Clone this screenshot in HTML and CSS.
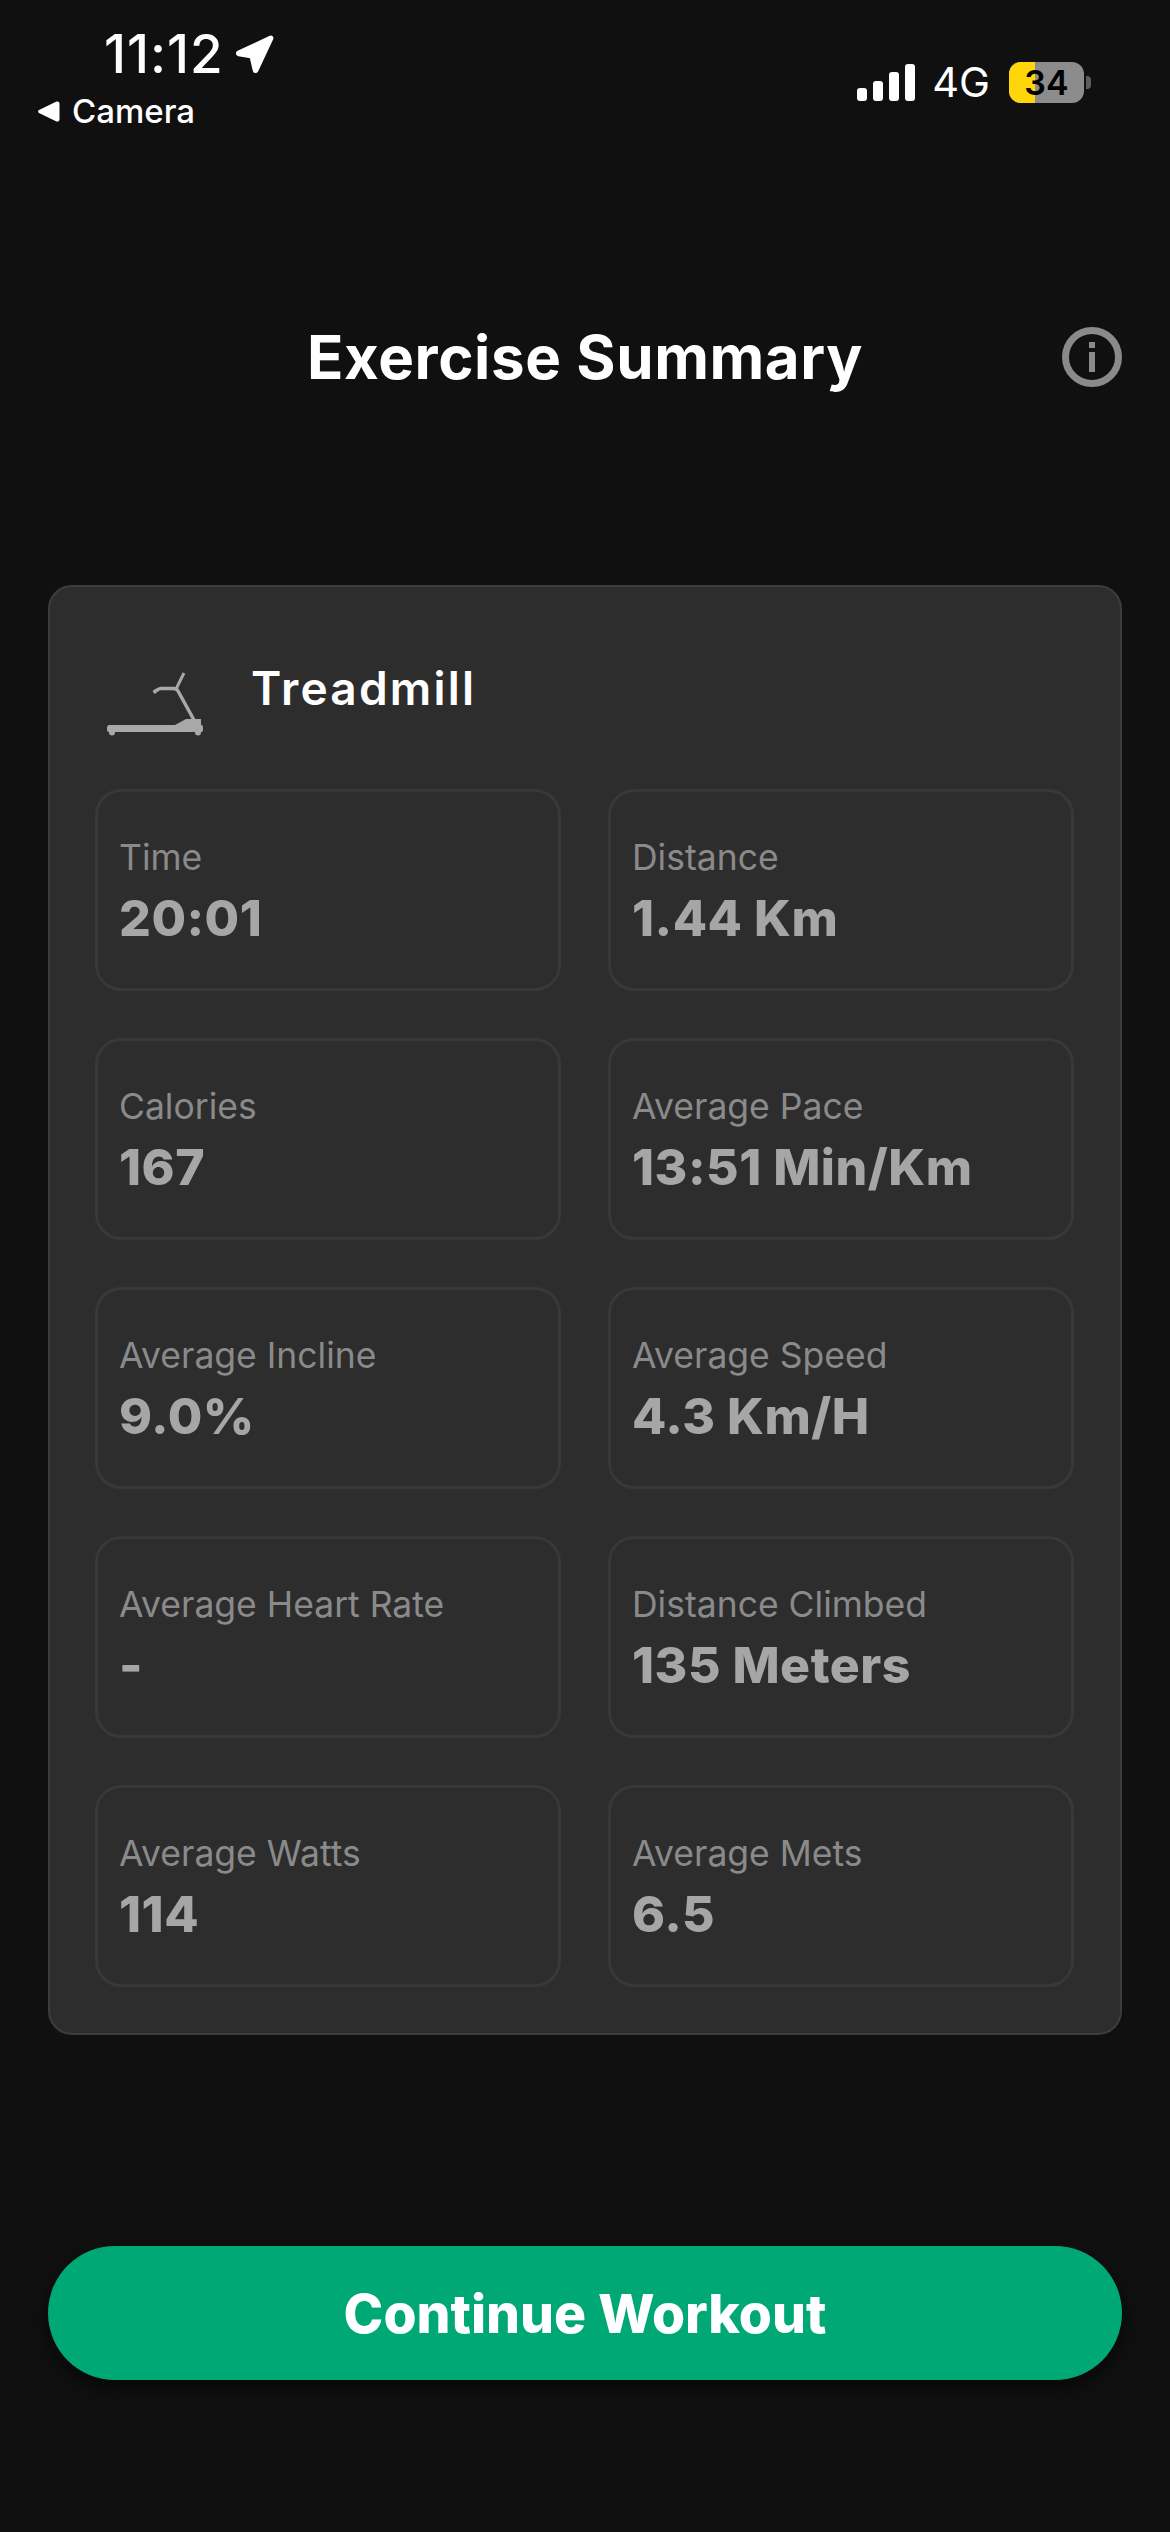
FILE: index.html
```html
<!DOCTYPE html>
<html>
<head>
	<title>Exercise Summary</title>
	<meta charset="UTF-8">
	<link rel="stylesheet" href="styles.css">
</head>
<body>
	<div class="statusbar">
		<div class="status-left">
			<div class="clock">
				<span>11:12</span>
				<svg class="arrow" viewBox="0 0 39 38"><path d="M3 16.5 35 1.5c1.600-.8 3.200.8 2.500 2.400L22.500 36c-.9 1.900-3.600 1.600-4-.5L15.500 22.500 3.500 20.500C1.400 20.100 1 17.500 3 16.500Z" fill="#fff" stroke="#fff" stroke-width="1.500" stroke-linejoin="round"/></svg>
			</div>
			<div class="back">
				<svg class="back-arrow" viewBox="0 0 22 21"><path d="M1 9 18.500.6C20 0 21.500 1 21.500 2.500v16c0 1.500-1.500 2.500-3 1.900L1 12c-1.300-.6-1.300-2.400 0-3Z" fill="#fff"/></svg>
				<span>Camera</span>
			</div>
		</div>
		<div class="status-right">
			<div class="signal">
				<i class="bar bar1"></i><i class="bar bar2"></i><i class="bar bar3"></i><i class="bar bar4"></i>
			</div>
			<span class="network">4G</span>
			<div class="battery">
				<div class="battery-body"><div class="battery-fill"></div><span>34</span></div>
				<div class="battery-nub"></div>
			</div>
		</div>
	</div>

	<div class="header">
		<span></span>
		<h1>Exercise Summary</h1>
		<svg class="info" viewBox="0 0 60 60">
			<circle cx="30" cy="30" r="26.500" fill="none" stroke="#8a8a8a" stroke-width="7"/>
			<rect x="27" y="15" width="6" height="6" fill="#8a8a8a"/>
			<rect x="27" y="25" width="6" height="20" fill="#8a8a8a"/>
		</svg>
	</div>

	<div class="card">
		<div class="card-title">
			<svg class="treadmill" viewBox="0 0 96 64">
				<path d="M3 53H68L79 47H94V53H94.500C96 53 96 55 96 56.500C96 58 96 60 94.500 60H2C0 60 0 58 0 56.500C0 55 0 53 3 53Z" fill="#a8a8a8"/>
				<circle cx="5" cy="60.500" r="3" fill="#a8a8a8"/>
				<circle cx="91" cy="60.500" r="3" fill="#a8a8a8"/>
				<path d="M87 48 71 19C70 17 68 16.500 66 16.500H54C51 16.500 49 19 46.500 20.500" fill="none" stroke="#a8a8a8" stroke-width="3.500"/>
				<path d="M69 17 77 1" fill="none" stroke="#a8a8a8" stroke-width="3"/>
			</svg>
			<h2>Treadmill</h2>
		</div>
		<div class="stats">
			<div class="stat"><div class="stat-label">Time</div><div class="stat-value">20:01</div></div>
			<div class="stat"><div class="stat-label">Distance</div><div class="stat-value">1.44 Km</div></div>
			<div class="stat"><div class="stat-label">Calories</div><div class="stat-value">167</div></div>
			<div class="stat"><div class="stat-label">Average Pace</div><div class="stat-value">13:51 Min/Km</div></div>
			<div class="stat"><div class="stat-label">Average Incline</div><div class="stat-value">9.0%</div></div>
			<div class="stat"><div class="stat-label">Average Speed</div><div class="stat-value">4.3 Km/H</div></div>
			<div class="stat"><div class="stat-label">Average Heart Rate</div><div class="stat-value">-</div></div>
			<div class="stat"><div class="stat-label">Distance Climbed</div><div class="stat-value">135 Meters</div></div>
			<div class="stat"><div class="stat-label">Average Watts</div><div class="stat-value">114</div></div>
			<div class="stat"><div class="stat-label">Average Mets</div><div class="stat-value">6.5</div></div>
		</div>
	</div>

	<div class="footer">
		<button class="continue">Continue Workout</button>
	</div>
</body>
</html>
```

FILE: styles.css
```css
body{
	margin: 0;
	height: 2532px;
	background: #101011;
	color: #fff;
	font-family: Inter, "Liberation Sans", sans-serif;
	overflow: hidden;
}

.statusbar{
	display: flex;
	justify-content: space-between;
	align-items: flex-start;
	height: 150px;
}

.status-left{
	padding: 24px 0 0 38px;
}

.clock{
	display: flex;
	align-items: center;
	gap: 11px;
	padding-left: 66px;
	height: 60px;
	font-size: 53px;
	font-weight: 500;
	letter-spacing: 1px;
}

.arrow{
	width: 39px;
	height: 38px;
}

.back{
	display: flex;
	align-items: center;
	gap: 12px;
	margin-top: 7px;
	font-size: 33px;
	font-weight: 500;
}

.back-arrow{
	width: 22px;
	height: 21px;
}

.status-right{
	display: flex;
	align-items: center;
	padding: 57px 79px 0 0;
}

.signal{
	display: flex;
	align-items: flex-end;
	gap: 6px;
	height: 37px;
}

.bar{
	display: block;
	width: 10px;
	border-radius: 3px;
	background: #fff;
}

.bar1{ height: 13px; }
.bar2{ height: 20px; }
.bar3{ height: 29px; }
.bar4{ height: 37px; }

.network{
	margin-left: 17px;
	font-size: 41.500px;
}

.battery{
	display: flex;
	align-items: center;
	margin-left: 19px;
}

.battery-body{
	position: relative;
	display: flex;
	justify-content: center;
	align-items: center;
	width: 75px;
	height: 41px;
	border-radius: 12px;
	background: #8c8c8c;
	overflow: hidden;
	color: #000;
	font-size: 34px;
	font-weight: 600;
}

.battery-body span{
	position: relative;
}

.battery-fill{
	position: absolute;
	top: 0;
	bottom: 0;
	left: 0;
	width: 26px;
	background: #ffd60a;
}

.battery-nub{
	width: 5px;
	height: 13px;
	margin-left: 2px;
	border-radius: 0 4px 4px 0;
	background: #5c5c5c;
}

.header{
	display: grid;
	grid-template-columns: 1fr auto 1fr;
	align-items: center;
	padding: 171px 48px 0;
}

.header h1{
	margin: 0;
	font-size: 60px;
	font-weight: 700;
	letter-spacing: 0.6px;
}

.info{
	justify-self: end;
	width: 60px;
	height: 60px;
}

.card{
	box-sizing: border-box;
	width: 1074px;
	height: 1450px;
	margin: 192px 48px 0;
	padding: 0 45px;
	border: 2px solid #3d3d3d;
	border-radius: 24px;
	background: #2d2d2d;
}

.card-title{
	display: flex;
	gap: 48px;
	height: 202px;
	padding: 85px 0 0 12px;
	box-sizing: border-box;
}

.card-title h2{
	margin: -12px 0 0;
	font-size: 46px;
	font-weight: 600;
	letter-spacing: 2.200px;
}

.treadmill{
	width: 96px;
	height: 64px;
}

.stats{
	display: grid;
	grid-template-columns: 466px 466px;
	grid-auto-rows: 202px;
	gap: 47px;
}

.stat{
	box-sizing: border-box;
	padding: 45px 21px 0;
	border: 3px solid #383838;
	border-radius: 26px;
}

.stat-label{
	color: #8a8a8a;
	font-size: 35.500px;
	line-height: 42px;
}

.stat-value{
	margin-top: 11px;
	color: #a6a6a6;
	font-size: 50px;
	line-height: 56px;
	font-weight: 800;
	letter-spacing: 0.5px;
}

.footer{
	padding: 211px 48px 0;
}

.continue{
	display: block;
	width: 100%;
	height: 134px;
	border: none;
	border-radius: 67px;
	background: #00a876;
	box-shadow: 0 8px 20px rgba(0,0,0,0.6);
	color: #fff;
	font-family: inherit;
	font-size: 53.500px;
	font-weight: 800;
}
```
